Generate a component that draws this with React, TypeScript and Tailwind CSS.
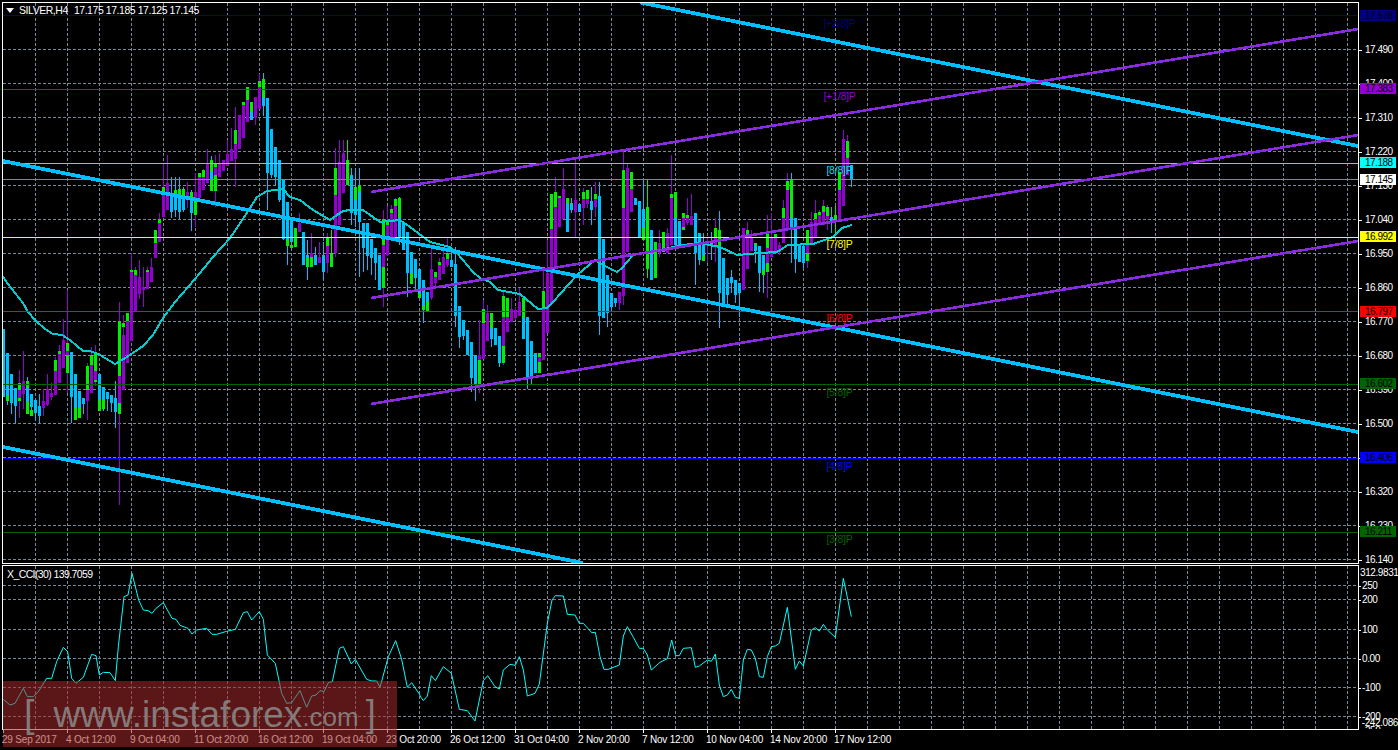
import React from 'react';

// Bar tuple: [x in 3x crop, colour, body top, body bottom, wick top, wick bottom, green top?, green bottom?]
type Bar = [number, 'b' | 'p' | 'g', number, number, number, number, number?, number?];

type BarGroup = { x0: number; y0: number; bars: Bar[] };

const BAR_GROUPS: BarGroup[] = [
  {
    x0: 0,
    y0: 280,
    bars: [
      [12, 'b', 147, 350, 147, 350, 300, 350], [24, 'b', 220, 345, 220, 375, 345, 362], [36, 'b', 282, 368, 282, 402], [48, 'b', 324, 378, 324, 430],
      [60, 'p', 330, 355, 270, 414, 310, 362], [72, 'p', 304, 342, 213, 388], [84, 'b', 320, 365, 292, 402, 304, 402], [96, 'b', 342, 382, 342, 408, 390, 408],
      [108, 'b', 360, 400, 360, 420], [120, 'b', 378, 408, 342, 430, 388, 408], [132, 'p', 362, 384, 328, 408], [144, 'p', 328, 375, 282, 378],
      [156, 'p', 340, 352, 310, 360], [168, 'p', 272, 345, 230, 345, 240, 345], [180, 'p', 222, 310, 195, 310, 213, 222], [192, 'p', 180, 265, 118, 265],
      [204, 'p', 213, 225, 30, 340, 190, 280], [216, 'b', 216, 350, 216, 430], [228, 'b', 282, 385, 282, 420, 385, 420], [240, 'b', 333, 385, 333, 414, 376, 414],
      [252, 'b', 354, 372, 354, 402], [264, 'p', 330, 362, 250, 420, 258, 342], [276, 'p', 255, 340, 200, 340, 225, 255], [288, 'p', 274, 300, 195, 318, 216, 305],
      [300, 'b', 282, 360, 282, 393, 360, 393], [312, 'b', 322, 360, 322, 393, 322, 387], [324, 'b', 336, 358, 336, 392], [336, 'b', 345, 368, 345, 395, 360, 368],
      [348, 'b', 354, 395, 303, 445, 380, 395], [360, 'p', 288, 370, 66, 675, 123, 402], [372, 'p', 165, 330, 105, 330, 128, 142], [384, 'p', 123, 250, 98, 250, 98, 123],
    ],
  },
  {
    x0: 0,
    y0: 0,
    bars: [
      [396, 'p', 815, 1023, 760, 1023, 810, 840], [408, 'p', 825, 936, 800, 936, 810, 830], [420, 'p', 830, 882, 780, 897], [432, 'p', 860, 870, 800, 920],
      [444, 'p', 815, 867, 800, 867, 810, 830], [456, 'p', 800, 846, 775, 846], [468, 'p', 730, 775, 690, 775, 690, 730], [480, 'p', 670, 725, 640, 725, 658, 670],
      [492, 'p', 580, 650, 490, 650, 562, 580], [504, 'p', 550, 630, 465, 630], [516, 'b', 585, 635, 530, 655, 605, 635], [528, 'b', 595, 630, 530, 650, 570, 630],
      [540, 'b', 590, 635, 530, 658, 568, 635], [552, 'b', 590, 630, 560, 635, 568, 590], [564, 'p', 575, 600, 545, 625], [576, 'b', 600, 640, 570, 692, 575, 640],
      [588, 'p', 575, 600, 520, 680, 600, 645], [600, 'p', 530, 595, 518, 595, 518, 530], [612, 'p', 530, 570, 508, 570, 510, 530], [624, 'p', 488, 550, 448, 550],
      [636, 'b', 515, 540, 468, 570, 480, 572], [648, 'p', 500, 525, 465, 620, 488, 572], [660, 'p', 488, 530, 460, 530], [672, 'p', 480, 512, 480, 512],
      [684, 'p', 462, 498, 420, 498], [696, 'p', 448, 482, 385, 482, 465, 478], [708, 'p', 432, 478, 320, 562, 390, 435], [720, 'p', 345, 448, 345, 448, 345, 400],
      [732, 'p', 315, 415, 305, 415, 305, 315], [744, 'p', 300, 365, 262, 365, 262, 300], [756, 'b', 335, 360, 305, 360, 305, 335], [768, 'p', 292, 355, 292, 375, 340, 352],
      [780, 'p', 262, 328, 222, 328, 243, 262], [792, 'b', 290, 318, 218, 348, 238, 318], [804, 'b', 295, 520, 295, 630, 485, 520], [816, 'b', 388, 525, 388, 535, 490, 525],
      [828, 'b', 440, 530, 440, 555, 505, 530], [840, 'b', 480, 600, 480, 605], [852, 'b', 540, 718, 540, 720, 675, 718], [864, 'b', 605, 718, 605, 795, 718, 738],
      [876, 'b', 660, 725, 660, 745, 735, 745], [888, 'g', 685, 742, 685, 742], [900, 'p', 670, 695, 640, 695], [912, 'b', 695, 795, 695, 795, 760, 795],
      [924, 'b', 765, 775, 720, 840, 770, 800], [936, 'p', 760, 770, 700, 800, 770, 800], [948, 'b', 765, 795, 740, 795], [960, 'p', 770, 790, 725, 790],
      [972, 'b', 765, 815, 725, 840], [984, 'p', 738, 790, 700, 820, 715, 738], [996, 'g', 760, 800, 690, 800], [1008, 'p', 585, 760, 445, 770, 505, 585],
      [1020, 'p', 485, 675, 420, 675], [1032, 'p', 460, 580, 420, 580], [1044, 'g', 480, 555, 420, 555],
    ],
  },
  {
    x0: 350,
    y0: 130,
    bars: [
      [6, 'b', 135, 250, 115, 285], [18, 'b', 210, 255, 114, 290, 172, 255], [30, 'b', 185, 275, 114, 440, 165, 185], [42, 'b', 280, 355, 280, 425, 335, 355],
      [54, 'b', 280, 378, 280, 420], [66, 'b', 328, 385, 328, 435], [78, 'b', 355, 400, 355, 450], [90, 'b', 375, 480, 375, 480, 440, 480],
      [102, 'p', 345, 410, 240, 530, 268, 475], [114, 'p', 285, 375, 228, 378, 270, 285], [126, 'p', 250, 320, 225, 320, 238, 252], [138, 'p', 228, 325, 205, 325, 208, 228],
      [150, 'b', 262, 325, 200, 345, 204, 325], [162, 'b', 275, 360, 275, 360], [174, 'b', 305, 430, 305, 500], [186, 'b', 365, 430, 365, 462, 430, 462],
      [198, 'b', 388, 445, 388, 480], [210, 'b', 418, 490, 418, 505, 490, 505], [222, 'b', 450, 525, 450, 580, 525, 540], [234, 'b', 485, 515, 485, 545, 515, 545],
      [246, 'p', 418, 505, 355, 510], [258, 'p', 442, 460, 425, 475, 425, 442], [270, 'p', 405, 450, 385, 450, 395, 405], [282, 'p', 380, 432, 360, 432],
      [294, 'p', 387, 405, 325, 412, 370, 387], [306, 'b', 390, 412, 350, 412], [318, 'b', 402, 558, 350, 590, 500, 558], [330, 'b', 528, 620, 528, 655, 605, 620],
      [342, 'b', 570, 618, 570, 630], [354, 'b', 600, 675, 600, 675], [366, 'b', 635, 745, 635, 785], [378, 'b', 675, 765, 675, 812, 745, 765],
      [390, 'p', 675, 690, 570, 790, 690, 765], [402, 'p', 580, 688, 510, 688, 537, 580], [414, 'p', 548, 632, 525, 632], [426, 'b', 590, 628, 548, 650, 548, 628],
      [438, 'b', 595, 645, 595, 645], [450, 'b', 618, 700, 618, 710, 678, 700], [462, 'p', 562, 648, 480, 705, 498, 700], [474, 'p', 562, 605, 505, 605, 505, 562],
      [486, 'p', 537, 575, 505, 575], [498, 'p', 540, 565, 530, 570], [510, 'p', 515, 558, 475, 558], [522, 'b', 560, 628, 505, 628, 505, 628],
      [534, 'b', 560, 745, 560, 778, 707, 745], [546, 'b', 633, 740, 633, 765, 705, 740], [558, 'b', 670, 730, 670, 730], [570, 'p', 682, 695, 668, 730, 668, 730],
      [582, 'p', 530, 690, 420, 690, 483, 530], [594, 'p', 430, 610, 330, 610], [606, 'p', 298, 520, 192, 520, 192, 298], [618, 'p', 232, 410, 140, 410, 185, 232],
      [630, 'p', 205, 290, 198, 290, 198, 290], [642, 'p', 178, 268, 115, 268], [654, 'b', 218, 305, 205, 305, 205, 300], [666, 'b', 220, 240, 205, 250, 220, 240],
      [678, 'p', 210, 245, 88, 320], [690, 'b', 222, 245, 222, 245], [702, 'p', 208, 235, 175, 285, 185, 235], [714, 'p', 208, 222, 180, 235, 180, 208],
      [726, 'b', 213, 240, 170, 285], [738, 'p', 208, 230, 155, 260, 192, 208], [750, 'b', 198, 558, 155, 615, 500, 558], [762, 'b', 327, 565, 327, 565, 545, 565],
      [774, 'b', 435, 550, 435, 590], [786, 'b', 490, 530, 490, 545], [798, 'b', 505, 518, 505, 530, 505, 518], [810, 'p', 485, 520, 485, 540],
      [822, 'p', 235, 498, 65, 525, 120, 235], [834, 'p', 115, 365, 100, 365], [846, 'p', 178, 245, 125, 245, 125, 178], [858, 'b', 205, 225, 205, 225],
      [870, 'b', 212, 325, 212, 325, 292, 325], [882, 'b', 238, 290, 150, 330, 238, 330], [894, 'g', 232, 418, 150, 445], [906, 'b', 300, 450, 300, 450, 430, 450],
      [918, 'g', 335, 445, 335, 445], [930, 'p', 340, 370, 300, 380], [942, 'g', 305, 365, 305, 365], [954, 'p', 310, 368, 295, 368],
      [966, 'p', 205, 345, 75, 345, 192, 205], [978, 'b', 265, 345, 185, 345, 185, 345], [990, 'b', 272, 345, 272, 345], [1002, 'p', 265, 290, 250, 290, 250, 300],
      [1014, 'p', 265, 280, 205, 285, 255, 265], [1026, 'p', 258, 285, 192, 285], [1038, 'b', 250, 370, 250, 465, 250, 370], [1050, 'b', 310, 390, 310, 405],
    ],
  },
  {
    x0: 700,
    y0: 130,
    bars: [
      [12, 'b', 340, 375, 310, 392, 340, 392], [24, 'p', 335, 345, 320, 400], [36, 'b', 335, 345, 305, 390], [48, 'p', 320, 345, 265, 395, 295, 340],
      [60, 'b', 345, 490, 243, 595, 300, 345], [72, 'b', 385, 520, 385, 530, 500, 520], [84, 'b', 445, 495, 445, 530, 485, 495], [96, 'b', 445, 460, 420, 490, 440, 455],
      [108, 'b', 450, 495, 450, 520], [120, 'b', 460, 490, 460, 560], [132, 'p', 295, 480, 295, 480, 295, 345], [144, 'p', 315, 418, 275, 418, 300, 315],
      [156, 'p', 320, 362, 300, 362], [168, 'b', 348, 362, 340, 400, 340, 362], [180, 'b', 348, 430, 348, 485, 415, 430], [192, 'b', 375, 420, 375, 490, 420, 435],
      [204, 'p', 355, 400, 255, 505, 310, 425], [216, 'p', 320, 380, 250, 380], [228, 'p', 320, 365, 312, 365, 312, 345], [240, 'p', 345, 365, 335, 375],
      [252, 'p', 265, 340, 210, 340, 235, 265], [264, 'p', 180, 300, 130, 300, 152, 180], [276, 'b', 265, 295, 130, 400, 148, 295], [288, 'b', 265, 388, 265, 428],
      [300, 'b', 345, 395, 345, 395, 370, 395], [312, 'b', 348, 400, 348, 415], [324, 'p', 340, 370, 300, 415, 300, 392], [336, 'p', 275, 345, 245, 345],
      [348, 'p', 268, 320, 210, 320, 250, 268], [360, 'p', 255, 285, 240, 285, 245, 260], [372, 'p', 245, 285, 210, 285, 228, 245], [384, 'p', 258, 270, 225, 300, 230, 270],
      [396, 'b', 262, 272, 232, 310], [408, 'g', 255, 272, 228, 310], [420, 'p', 180, 270, 125, 270, 125, 180], [432, 'p', 27, 228, 0, 228],
      [444, 'p', 85, 135, 15, 135, 33, 85], [456, 'b', 105, 150, 105, 172],
    ],
  },
];

const BAR_FILL = { b: '#00BFFF', p: '#9400D3', g: '#00F000' };

const MA_POINTS =
  '3,276 5,280 15,293 23,303 28,312 35,320 45,329 53,334 62,335 70,340 83,351 90,351 100,355 115,364 122,360 130,355 143,346 153,335 163,318 175,302 195,279 213,257 230,238 247,213 257,197 267,191 283,189 290,197 300,200 313,210 330,220 337,215 343,211 350,210 363,210 380,222 400,220 410,227 430,242 450,247 457,253 473,272 480,278 490,282 498,290 520,294 538,309 547,308 553,302 577,275 595,260 607,267 617,272 622,268 633,255 660,250 683,245 700,243 720,247 737,255 760,253 777,252 788,245 813,244 833,237 842,228 852,225';

// CCI traced from the crops, in 3x units
const CCI_LEFT = [[10,418],[30,435],[45,430],[70,385],[82,410],[100,410],[115,395],[140,355],[155,355],[170,305],[190,262],[203,275],[215,355],[228,370],[250,352],[275,283],[288,287],[298,345],[310,337],[330,338],[346,362],[355,260],[372,110],[384,105],[396,40],[416,120],[430,150],[444,152],[456,160],[468,145],[490,128],[516,175],[528,178],[540,196],[564,205],[576,222],[590,210],[620,205],[636,223],[650,223],[680,214],[706,208],[730,158],[742,155],[755,180],[778,155],[790,178],[802,285],[826,310],[845,400],[860,430],[875,428],[900,392],[920,442],[935,408],[948,405],[960,392],[972,395],[985,368],[997,365],[1018,265],[1030,260],[1054,312],[1066,298],[1100,358],[1115,363],[1130,363],[1140,382],[1165,290],[1187,242],[1205,298],[1222,382],[1235,368],[1260,405]];
const CCI_RIGHT = [[0,408],[10,422],[22,408],[34,347],[46,362],[70,320],[94,340],[118,448],[142,452],[165,483],[190,362],[203,347],[225,380],[238,387],[250,330],[270,313],[286,316],[298,290],[310,330],[322,408],[345,400],[358,372],[382,190],[396,120],[406,107],[430,108],[442,163],[465,165],[478,190],[490,190],[515,218],[526,217],[540,290],[552,328],[565,328],[598,315],[610,228],[622,200],[640,232],[658,265],[670,265],[682,285],[694,330],[720,307],[742,296],[755,240],[767,287],[778,287],[790,265],[814,263],[826,322],[838,318],[862,300],[874,304],[886,282],[898,375],[910,410],[922,405],[934,388],[946,412],[958,415],[970,300],[982,268],[994,270],[1006,295],[1018,350],[1030,352],[1042,290],[1054,260],[1066,258],[1078,250],[1102,142],[1126,328],[1138,303],[1150,318],[1174,210],[1186,203],[1198,213],[1210,193],[1222,210],[1246,232],[1270,55],[1294,170]];

const CCI_POINTS = [
  ...CCI_LEFT.map(([x, y]) => `${x / 3},${560 + y / 3}`),
  ...CCI_RIGHT.map(([x, y]) => `${420 + x / 3},${560 + y / 3}`),
].join(' ');

const GRID_X = Array.from({ length: 42 }, (_, i) => 35.5 + i * 32);
const GRID_Y = Array.from({ length: 16 }, (_, i) => 49.5 + i * 34);
const SUB_GRID_Y = [585.5, 599.5, 629.5, 658.5, 687.5, 716.5];

const LEVELS = [
  { y: 15.5, color: '#000099' },
  { y: 89.5, color: '#8410B0' },
  { y: 163.5, color: '#00FFFF' },
  { y: 179.5, color: '#778899' },
  { y: 237.5, color: '#FFFF00' },
  { y: 311.5, color: '#FF0000' },
  { y: 384.5, color: '#006400' },
  { y: 458.5, color: '#0000FF' },
  { y: 532.5, color: '#006400' },
];

const MURREY_LABELS = [
  { text: '[+2/8]P', y: 27, color: '#000080' },
  { text: '[+1/8]P', y: 100, color: '#9400D3' },
  { text: '[8/8]P', y: 174, color: '#00DDEE' },
  { text: '[7/8]P', y: 248, color: '#FFFF00' },
  { text: '[6/8]P', y: 322, color: '#FF0000' },
  { text: '[5/8]P', y: 396, color: '#006400' },
  { text: '[4/8]P', y: 470, color: '#0000FF' },
  { text: '[3/8]P', y: 543, color: '#006400' },
];

const PRICE_TICKS = ['17.490', '17.400', '17.310', '17.220', '17.130', '17.040', '16.950', '16.860', '16.770', '16.680', '16.590', '16.500', '16.410', '16.320', '16.230', '16.140'];

const PRICE_TAGS = [
  { label: '17.578', className: 'top-[8px] bg-[#000080]' },
  { label: '17.383', className: 'top-[81px] bg-[#9400D3]' },
  { label: '17.188', className: 'top-[155px] bg-[#00FFFF]' },
  { label: '17.145', className: 'top-[172px] bg-white' },
  { label: '16.992', className: 'top-[229px] bg-[#FFFF00]' },
  { label: '16.797', className: 'top-[304px] bg-[#FF0000]' },
  { label: '16.602', className: 'top-[376px] bg-[#006400]' },
  { label: '16.406', className: 'top-[450px] bg-[#0000FF]' },
  { label: '16.211', className: 'top-[524px] bg-[#006400]' },
];

const CCI_TICKS = [
  { label: '312.9831', className: 'h-[12px]', tick: false },
  { label: '250', className: 'h-[14px]', tick: true },
  { label: '200', className: 'h-[14px]', tick: true },
  { label: '100', className: 'h-[46px]', tick: true },
  { label: '0.00', className: 'h-[12px]', tick: true },
  { label: '-100', className: 'h-[46px]', tick: true },
  { label: '-200', className: 'h-[12px]', tick: true },
  { label: '-242.086', className: 'h-[12px] -mt-[6px]', tick: false },
];

const TIME_LABELS = ['29 Sep 2017', '4 Oct 12:00', '9 Oct 04:00', '11 Oct 20:00', '16 Oct 12:00', '19 Oct 04:00', '23 Oct 20:00', '26 Oct 12:00', '31 Oct 04:00', '2 Nov 20:00', '7 Nov 12:00', '10 Nov 04:00', '14 Nov 20:00', '17 Nov 12:00'];

const GridLines = ({ ys, y1, y2 }: { ys: number[]; y1: number; y2: number }) => (
  <g stroke="#778899" strokeDasharray="3 2" shapeRendering="crispEdges">
    {GRID_X.map((x) => <line key={x} x1={x} x2={x} y1={y1} y2={y2} />)}
    {ys.map((y) => <line key={y} x1={3} x2={1358} y1={y} y2={y} />)}
  </g>
);

const Candles = () => (
  <g shapeRendering="crispEdges">
    {BAR_GROUPS.flatMap(({ x0, y0, bars }) =>
      bars.map(([zx, kind, top, bot, wickTop, wickBot, greenTop, greenBot]) => {
        const x = Math.round(x0 + zx / 3);
        const y = (z: number) => y0 + z / 3;
        return (
          <g key={`${x0}-${zx}`}>
            <rect x={x - 1} y={y(wickTop)} width={1} height={(wickBot - wickTop) / 3} fill={BAR_FILL[kind]} />
            {greenTop !== undefined && greenBot !== undefined && (
              <rect x={x - 2} y={y(greenTop)} width={3} height={(greenBot - greenTop) / 3} fill={BAR_FILL.g} />
            )}
            <rect x={x - 2} y={y(top)} width={3} height={(bot - top) / 3} fill={BAR_FILL[kind]} />
          </g>
        );
      }),
    )}
  </g>
);

const MainChart = () => (
  <svg width={1355} height={560} viewBox="3 3 1355 560" className="block">
    <GridLines ys={GRID_Y} y1={3} y2={563} />
    <Candles />
    <polyline points={MA_POINTS} fill="none" stroke="#00CED1" strokeWidth={2} shapeRendering="crispEdges" />
    <g shapeRendering="crispEdges">
      {LEVELS.map((l) => <line key={l.y} x1={3} x2={1358} y1={l.y} y2={l.y} stroke={l.color} />)}
    </g>
    {/* regression channels */}
    <g stroke="#00BFFF" strokeWidth={3.8} shapeRendering="crispEdges">
      <line x1={3} y1={161} x2={1358} y2={432} />
      <line x1={640} y1={2.4} x2={1358} y2={146} />
      <line x1={3} y1={447} x2={583} y2={563} />
    </g>
    <g stroke="#8A2BE2" strokeWidth={2.6} shapeRendering="crispEdges">
      <line x1={371} y1={192} x2={1358} y2={29} />
      <line x1={371} y1={298} x2={1358} y2={135} />
      <line x1={371} y1={404} x2={1358} y2={241} />
    </g>
    <g fontFamily="'Liberation Sans', sans-serif" fontSize={10.5} textAnchor="middle">
      {MURREY_LABELS.map((l) => <text key={l.text} x={839.5} y={l.y} fill={l.color}>{l.text}</text>)}
    </g>
  </svg>
);

const CciChart = () => (
  <svg width={1355} height={163} viewBox="3 566 1355 163" className="block">
    <GridLines ys={SUB_GRID_Y} y1={566} y2={729} />
    <polyline points={CCI_POINTS} fill="none" stroke="#00FFFF" strokeWidth={1} />
  </svg>
);

export default function App() {
  return (
    <div className="relative w-[1398px] h-[750px] overflow-hidden bg-black pt-[2px] pl-[2px] text-[10px] leading-none text-white font-['Liberation_Sans',sans-serif] tracking-[-0.2px]">
      <div className="flex h-[562px]">
        <div className="relative w-[1357px] border border-white">
          <MainChart />
          <div className="absolute left-[3px] top-[2px] flex items-center gap-[5px] text-[10.5px] tracking-[-0.45px]">
            <svg width={8} height={5} viewBox="0 0 8 5"><path d="M0 0h8L4 5z" fill="#fff" /></svg>
            <span>SILVER,H4</span>
            <span className="ml-px">17.175 17.185 17.125 17.145</span>
          </div>
        </div>
        <div className="relative w-[39px] tracking-[-0.5px]">
          <div className="flex flex-col pt-[31px]">
            {PRICE_TICKS.map((t) => (
              <div key={t} className="flex h-[34px] shrink-0 items-center">
                <span className="mr-[3px] h-px w-[3px] bg-white" />
                <span>{t}</span>
              </div>
            ))}
          </div>
          {PRICE_TAGS.map((t) => (
            <div key={t.label} className={`absolute left-px flex h-[11px] w-[36px] items-center pl-[5px] text-black ${t.className}`}>
              {t.label}
            </div>
          ))}
        </div>
      </div>

      <div className="mt-px flex h-[165px]">
        <div className="relative w-[1357px] border border-white">
          <CciChart />
          <div className="absolute left-[4px] top-[3px] text-[10.5px] tracking-[-0.6px]">X_CCI(30) 139.7059</div>
        </div>
        <div className="flex w-[39px] flex-col overflow-hidden pt-[2px] tracking-[-0.4px]">
          {CCI_TICKS.map((t) => (
            <div key={t.label} className={`flex shrink-0 items-center ${t.className}`}>
              <span className={`mr-px h-px w-[2px] ${t.tick ? 'bg-white' : ''}`} />
              <span className="whitespace-nowrap">{t.label}</span>
            </div>
          ))}
          <div className="-mt-[3px] ml-[3px] h-[3px] shrink-0 overflow-hidden">-250</div>
        </div>
      </div>

      <div className="flex pl-px">
        {TIME_LABELS.map((t) => (
          <div key={t} className="flex w-[64px] shrink-0 flex-col">
            <span className="h-[3px] w-px bg-white" />
            <span className="-ml-px mt-[2px] whitespace-nowrap">{t}</span>
          </div>
        ))}
      </div>

      {/* watermark sits over the chart and the time axis */}
      <div className="absolute left-[3px] top-[681px] flex h-[66px] w-[394px] items-center bg-[#a52a2a]/55 pl-[21px] tracking-normal text-[#8c8c8c]/85">
        <span className="text-[38px] leading-none">[</span>
        <span className="ml-[19px] text-[37px] leading-none">www.instaforex</span>
        <span className="mt-[5px] text-[26px] leading-none">.com</span>
        <span className="ml-[7px] text-[36px] leading-none">]</span>
      </div>
    </div>
  );
}
